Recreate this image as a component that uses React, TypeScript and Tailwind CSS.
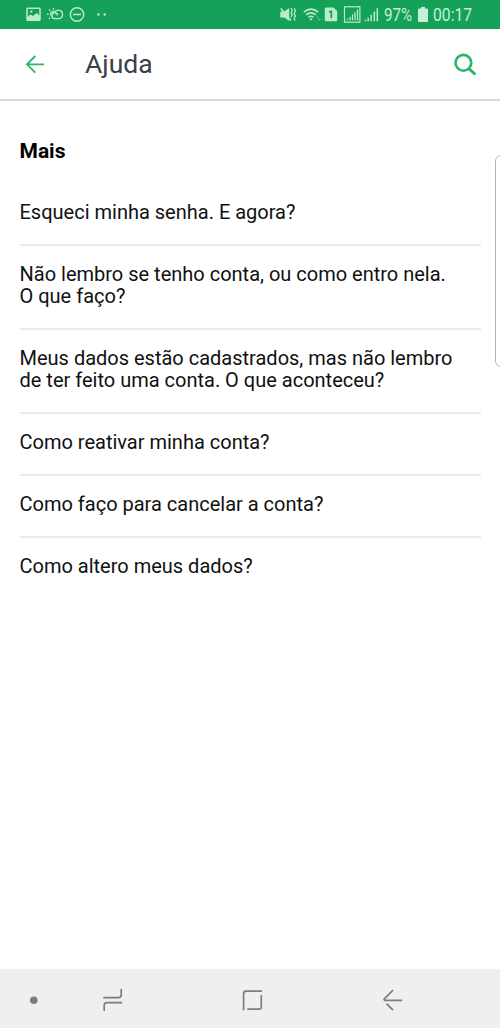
import React from "react";

const questions: string[][] = [
  ["Esqueci minha senha. E agora?"],
  ["Não lembro se tenho conta, ou como entro nela.", "O que faço?"],
  ["Meus dados estão cadastrados, mas não lembro", "de ter feito uma conta. O que aconteceu?"],
  ["Como reativar minha conta?"],
  ["Como faço para cancelar a conta?"],
  ["Como altero meus dados?"],
];

function StatusBar() {
  return (
    <div className="flex h-[29px] shrink-0 items-center bg-[#15a158] text-[#b9ebcd]">
      <svg width="270" height="29" viewBox="0 0 270 29" fill="none" stroke="currentColor" strokeWidth="1.5">
        <rect x="27" y="8.2" width="13" height="12" rx="0.8" />
        <path d="M27 17.5L30.3 14.5L32.8 16L36.8 13L40 16V20.3H27Z" fill="currentColor" stroke="none" />
        <circle cx="31.3" cy="11.7" r="1.1" fill="currentColor" stroke="none" />
        <path d="M50.6 15.4A3 3 0 0 1 54.2 11.6" strokeWidth="1.3" />
        <path d="M53.5 8V9.7M49 9.5L50.2 10.7M46.8 14.2H48.6M48.8 18.8L50 17.7" strokeWidth="1.3" />
        <path d="M57.6 15.4A2.9 2.9 0 1 0 54.6 18.6H58.4A4.2 4.2 0 1 0 54.6 12.4" strokeWidth="1.4" />
        <circle cx="77" cy="14.5" r="6.7" />
        <path d="M73 14.5H81" />
        <circle cx="98.5" cy="14.5" r="1.2" fill="currentColor" stroke="none" />
        <circle cx="104.7" cy="14.5" r="1.2" fill="currentColor" stroke="none" />
      </svg>
      <svg width="112" height="29" viewBox="270 0 112 29" fill="none" stroke="currentColor">
        <path d="M280.3 11.5H284.3L289.2 8V21L284.3 17.5H280.3Z" fill="currentColor" stroke="none" />
        <path d="M280.8 8.5L291 20.5" strokeWidth="1.5" />
        <path d="M291.2 8.3L292.2 10.5L291 12.8L292.2 15L291 17M294.3 8.3L295.4 11L294.1 13.5L295.4 16L294.1 18.5L295.2 20.5" strokeWidth="1.3" />
        <path d="M303.8 12.2Q311 6 318.2 12.2M306.2 14.8Q311 10.8 315.8 14.8M308.5 17.2Q311 15.3 313.5 17.2" strokeWidth="1.6" />
        <path d="M309.2 18.6H312.8L311 20.7Z" fill="currentColor" stroke="none" />
        <path d="M316.5 18L317.7 16.3L319 18ZM318.2 19L319.5 20.8L320.8 19Z" fill="currentColor" stroke="none" opacity=".55" />
        <path d="M324.8 8.7Q324.8 7.5 326 7.5H333.5L337.2 11V20Q337.2 21.2 336 21.2H326Q324.8 21.2 324.8 20Z" fill="currentColor" stroke="none" />
        <path d="M329 12.3L331.3 11.3V18.3" stroke="#15a158" strokeWidth="1.7" />
        <rect x="344.5" y="6.8" width="15.4" height="15.4" strokeWidth="1.2" />
        <path d="M347.5 20.3V18.8M350 20.3V17M352.5 20.3V14.5M355 20.3V12.2M357.5 20.3V9.5" strokeWidth="1.3" />
        <path d="M365.5 21.2V19.7M368.2 21.2V17.7M371.2 21.2V14.8M374.3 21.2V11.5M377.3 21.2V8.2" strokeWidth="1.5" />
      </svg>
      <div className="flex w-[118px] items-center pt-[2px] pl-[2px] font-normal text-[#c8efd7]">
        <span className="w-[28px] origin-left scale-x-[0.82] text-[18.5px] leading-[27px] whitespace-nowrap">97%</span>
        <svg className="mt-[-2px] ml-[6px]" width="10" height="15" viewBox="0 0 10 15" fill="currentColor">
          <path d="M3 0H7V1.5H9Q10 1.5 10 2.5V14Q10 15 9 15H1Q0 15 0 14V2.5Q0 1.5 1 1.5H3Z" />
        </svg>
        <span className="ml-[5px] w-[40px] origin-left scale-x-[0.85] text-[18.5px] leading-[27px] whitespace-nowrap">00:17</span>
      </div>
    </div>
  );
}

function Header() {
  return (
    <header className="flex h-[72px] shrink-0 items-center border-b-2 border-[#d8d8d8] bg-white">
      <svg className="ml-[25px]" width="20" height="20" viewBox="0 0 20 20" fill="none" stroke="#2ab567" strokeWidth="1.8" aria-label="Voltar">
        <path d="M19 10.3H2.5M10.3 2L2 10.3L10.3 18.6" />
      </svg>
      <h1 className="ml-[40px] text-[26.5px] leading-[30px] font-normal text-[#384049]">Ajuda</h1>
      <svg className="mt-px mr-[23px] ml-auto" width="24" height="24" viewBox="0 0 24 24" fill="none" stroke="#2ab567" strokeWidth="2.6" aria-label="Buscar">
        <circle cx="10.4" cy="9.8" r="7.9" />
        <path d="M15.8 15.5L22.3 21.5" strokeWidth="3" />
      </svg>
    </header>
  );
}

function NavigationBar() {
  return (
    <nav className="h-[59px] shrink-0 bg-[#efefef]">
      <svg width="500" height="59" viewBox="0 969 500 59" fill="none" stroke="#7d7d7d" strokeWidth="1.7">
        <circle cx="33.8" cy="1000.2" r="3.8" fill="#7d7d7d" stroke="none" />
        <path d="M121.2 989V994.8Q121.2 997.6 118.4 997.6H103.2M122.1 1002.7H107Q104.2 1002.7 104.2 1005.5V1011" />
        <path d="M243.6 1010.2V993.5Q243.6 991.1 246 991.1H262M261.3 995V1006.8Q261.3 1009.2 258.9 1009.2H247.3" />
        <path d="M402.2 1000.3H384.6Q383.6 999.6 384.6 998.6L393 990.2M386.5 1003.7L393 1010.2" />
      </svg>
    </nav>
  );
}

export default function App() {
  return (
    <div className="relative flex h-[1028px] w-[500px] flex-col overflow-hidden bg-white font-[Roboto,sans-serif]">
      <StatusBar />
      <Header />
      <main className="flex-1 pr-[19px] pl-[19.5px]">
        <h2 className="pt-[38px] text-[21px] leading-[24px] font-bold text-black">Mais</h2>
        <ul className="mt-[21px]">
          {questions.map((lines) => (
            <li key={lines[0]} className="border-b-2 border-[#ebebeb] pt-[17px] pb-[21px] text-[20px] leading-[22px] text-[#111] last:border-b-0">
              {lines.map((line) => (
                <div key={line} className="whitespace-nowrap">{line}</div>
              ))}
            </li>
          ))}
        </ul>
      </main>
      <NavigationBar />
      <div className="absolute top-[155px] left-[495px] h-[212px] w-[12px] rounded-[6px] border border-[#b5b5b5] bg-white" />
    </div>
  );
}
